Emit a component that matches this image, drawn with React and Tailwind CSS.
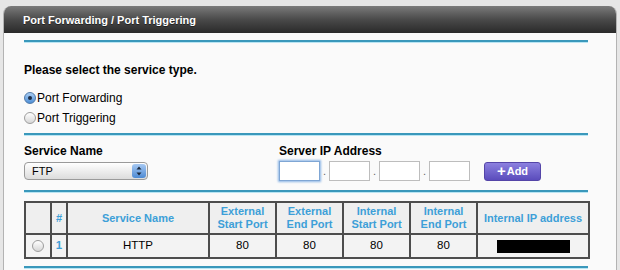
const COLS = [
  { w: 26, label: '' },
  { w: 16, label: '#' },
  { w: 142, label: 'Service Name' },
  { w: 67, label: ['External', 'Start Port'] },
  { w: 67, label: ['External', 'End Port'] },
  { w: 67, label: ['Internal', 'Start Port'] },
  { w: 67, label: ['Internal', 'End Port'] },
  { w: 112, label: 'Internal IP address' },
]

const Rule = () => (
  <div className="w-[564px] h-[2px] bg-[#3a98bb] shadow-[0_1px_0_#b9e5f3]" />
)

const Radio = ({ checked }) => (
  <span
    className={`inline-flex items-center justify-center w-[12px] h-[12px] rounded-full border ${
      checked
        ? 'border-[#4f79a8] bg-gradient-to-b from-[#a9cdf3] to-[#4d8fd6]'
        : 'border-[#9d9d9d] bg-gradient-to-b from-[#ffffff] to-[#d6d6d6]'
    }`}
  >
    {checked && <span className="w-[4px] h-[4px] rounded-full bg-[#1d2c44]" />}
  </span>
)

const IpBox = ({ focus }) => (
  <div
    className={`w-[41px] h-[20px] bg-white border ${
      focus ? 'border-[#7fa6d4] shadow-[0_0_2px_1px_#8db6e6]' : 'border-[#bdbdbd]'
    }`}
  />
)

const Dot = () => (
  <span className="w-[9px] text-center text-[11px] leading-[20px] text-[#666] self-end">.</span>
)

export default function App() {
  return (
    <div className="w-[620px] h-[270px] overflow-hidden bg-[#e6e6e6] pt-[6px] pl-[3px] font-['Liberation_Sans',Arial,sans-serif] text-black">
      <div className="w-[614px] h-[270px] rounded-t-[8px] overflow-hidden border-x border-[#b3b3b3] bg-[#fafafa]">
        <div className="h-[27px] flex items-center pl-[19px] pt-[2px] bg-gradient-to-b from-[#7b7b7b] via-[#4a4a4a] to-[#2a2a2a] text-white text-[11px] font-bold [text-shadow:0_1px_0_#222]">
          Port Forwarding / Port Triggering
        </div>

        <div className="pl-[20px]">
          <div className="mt-[7px]"><Rule /></div>

          <div className="mt-[21px] text-[12px] leading-[14px] font-bold">Please select the service type.</div>

          <div className="mt-[11px] flex flex-col">
            <label className="h-[20px] flex items-center gap-[1px] text-[12px]">
              <Radio checked />
              <span>Port Forwarding</span>
            </label>
            <label className="h-[20px] flex items-center gap-[1px] text-[12px]">
              <Radio />
              <span>Port Triggering</span>
            </label>
          </div>

          <div className="mt-[5px]"><Rule /></div>

          <div className="mt-[9px] flex">
            <div className="w-[255px]">
              <div className="text-[12px] leading-[14px] font-bold">Service Name</div>
              <div className="mt-[4px] w-[124px] h-[18px] rounded-[4px] border border-[#9a9a9a] bg-gradient-to-b from-white to-[#dcdcdc] flex items-center justify-between pl-[7px] pr-[1px]">
                <span className="text-[11px]">FTP</span>
                <span className="w-[14px] h-[14px] rounded-[3px] bg-gradient-to-b from-[#a7c9f2] to-[#4c8ad3] flex items-center justify-center">
                  <svg width="6" height="10" viewBox="0 0 6 10">
                    <path d="M3 0.5 L5.5 3.5 H0.5 Z M3 9.5 L5.5 6.5 H0.5 Z" fill="#1c2a3e" />
                  </svg>
                </span>
              </div>
            </div>
            <div>
              <div className="text-[12px] leading-[14px] font-bold">Server IP Address</div>
              <div className="mt-[3px] flex items-center">
                <IpBox focus />
                <Dot />
                <IpBox />
                <Dot />
                <IpBox />
                <Dot />
                <IpBox />
                <button className="ml-[14px] w-[57px] h-[19px] rounded-[3px] border border-[#5445a8] bg-gradient-to-b from-[#8c80df] to-[#5b4cbc] text-white text-[11px] font-bold flex items-center justify-center gap-[1px]">
                  <span className="text-[15px] leading-[14px] font-black">+</span>Add
                </button>
              </div>
            </div>
          </div>

          <div className="mt-[9px]"><Rule /></div>

          <table className="mt-[9px] w-[564px] table-fixed border-collapse border-2 border-[#4d4d4d] text-center">
            <colgroup>
              {COLS.map((c, i) => <col key={i} style={{ width: c.w }} />)}
            </colgroup>
            <thead>
              <tr className="h-[32px] bg-[#efefef]">
                {COLS.map((c, i) => (
                  <th key={i} className="border-2 border-[#4d4d4d] text-[11px] leading-[13px] font-bold text-[#3d9fd8] p-0">
                    {Array.isArray(c.label) ? (<>{c.label[0]}<br />{c.label[1]}</>) : c.label}
                  </th>
                ))}
              </tr>
            </thead>
            <tbody>
              <tr className="h-[24px] bg-[#f3f3f3] text-[11.5px]">
                <td className="border-2 border-[#4d4d4d] p-0"><div className="flex justify-center"><Radio /></div></td>
                <td className="border-2 border-[#4d4d4d] p-0 font-bold text-[#3d9fd8]">1</td>
                <td className="border-2 border-[#4d4d4d] p-0">HTTP</td>
                <td className="border-2 border-[#4d4d4d] p-0">80</td>
                <td className="border-2 border-[#4d4d4d] p-0">80</td>
                <td className="border-2 border-[#4d4d4d] p-0">80</td>
                <td className="border-2 border-[#4d4d4d] p-0">80</td>
                <td className="border-2 border-[#4d4d4d] p-0"><div className="mx-auto w-[73px] h-[13px] bg-black" /></td>
              </tr>
            </tbody>
          </table>

          <div className="mt-[7px]"><Rule /></div>
        </div>
      </div>
    </div>
  )
}
